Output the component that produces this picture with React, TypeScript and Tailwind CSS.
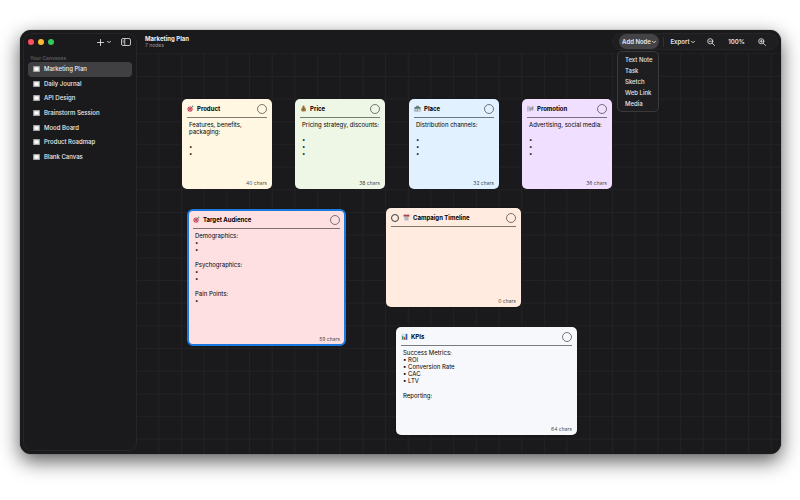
import { cva } from "class-variance-authority"
import clsx from "clsx"
import { useId, useState, type ReactNode } from "react"

type Tone = "cream" | "green" | "blue" | "purple" | "pink" | "peach" | "white"
type IconName = "target" | "money" | "store" | "megaphone" | "calendar" | "chart"

interface CanvasNode {
    id: string
    icon: IconName
    title: string
    tone: Tone
    x: number
    y: number
    width: number
    height: number
    chars: number
    blocks: string[][]
    task?: boolean
}

const canvases = [
    "Marketing Plan",
    "Daily Journal",
    "API Design",
    "Brainstorm Session",
    "Mood Board",
    "Product Roadmap",
    "Blank Canvas",
]

const nodeTypes = ["Text Note", "Task", "Sketch", "Web Link", "Media"]

// x / y are relative to the top left corner of the canvas
const nodes: CanvasNode[] = [
    { id: "product", icon: "target", title: "Product", tone: "cream", x: 45, y: 46, width: 90, height: 90, chars: 40, blocks: [["Features, benefits, packaging:"], ["•", "•"]] },
    { id: "price", icon: "money", title: "Price", tone: "green", x: 158, y: 46, width: 90, height: 90, chars: 38, blocks: [["Pricing strategy, discounts:"], ["•", "•", "•"]] },
    { id: "place", icon: "store", title: "Place", tone: "blue", x: 272, y: 46, width: 90, height: 90, chars: 32, blocks: [["Distribution channels:"], ["•", "•", "•"]] },
    { id: "promotion", icon: "megaphone", title: "Promotion", tone: "purple", x: 385, y: 46, width: 90, height: 90, chars: 36, blocks: [["Advertising, social media:"], ["•", "•", "•"]] },
    { id: "audience", icon: "target", title: "Target Audience", tone: "pink", x: 51, y: 157, width: 157, height: 135, chars: 59, blocks: [["Demographics:", "•", "•"], ["Psychographics:", "•", "•"], ["Pain Points:", "•"]] },
    { id: "timeline", icon: "calendar", title: "Campaign Timeline", tone: "peach", x: 249, y: 155, width: 135, height: 99, chars: 0, blocks: [], task: true },
    { id: "kpis", icon: "chart", title: "KPIs", tone: "white", x: 259, y: 274, width: 181, height: 108, chars: 64, blocks: [["Success Metrics:", "• ROI", "• Conversion Rate", "• CAC", "• LTV"], ["Reporting:"]] },
]

const card = cva("absolute flex flex-col rounded-[5px] px-[5px] text-left text-black", {
    variants: {
        tone: {
            cream: "bg-[#fff7e1]",
            green: "bg-[#eef7e6]",
            blue: "bg-[#e1f1ff]",
            purple: "bg-[#f0dfff]",
            pink: "bg-[#ffe0e2]",
            peach: "bg-[#ffebdf]",
            white: "bg-[#f7f8fb]",
        },
        selected: {
            true: "outline-2 -outline-offset-1 outline-[#1c79e0]",
            false: "shadow-[0_0_2px_rgba(0,0,0,0.5)]",
        },
    },
})

const nodeIcons: Record<IconName, ReactNode> = {
    target: (
        <>
            <circle cx="6.5" cy="8.5" r="5.5" fill="#c42b45" />
            <circle cx="6.5" cy="8.5" r="3.6" fill="#f3d4d8" />
            <circle cx="6.5" cy="8.5" r="2.2" fill="#c42b45" />
            <path d="M6.5 8.5 12 3" stroke="#4a4a4c" strokeWidth="1.2" />
            <path d="m10.5 3 2-2.5.4 1.6 1.6.4L12 4.8z" fill="#3f9a8c" />
        </>
    ),
    money: (
        <>
            <path d="M5.5 1h4.2L9 4c2.8 1.6 4 4.2 4 6.6 0 2.4-1.5 3.4-5.3 3.4S2.3 13 2.3 10.6c0-2.4 1.2-5 3.9-6.6z" fill="#a8834a" />
            <path d="M5.6 4h4" stroke="#6b4a1e" strokeWidth="1.3" />
            <path d="M9.3 7.8C7 6.8 5.8 8 7.6 9.3s1 2.9-1.7 2" fill="none" stroke="#5d4318" strokeWidth="1.2" />
        </>
    ),
    store: (
        <>
            <path d="M3.5 4.5 5 1.5h5l1.5 3z" fill="#6f8a80" />
            <path d="M1 6h13v8H1z" fill="#8b9a97" />
            <path d="M1 4.5h13v2.7H1z" fill="#53786a" />
            <path d="M3 9h3.5v3H3zM8.5 9H12v5H8.5z" fill="#dbe6ea" />
        </>
    ),
    megaphone: (
        <>
            <path d="M2 2v12" stroke="#8a8a90" strokeWidth="1.6" />
            <path d="M4 6.5 12.5 3v8.5L4 9.5z" fill="#a5a0ab" />
            <path d="M12.6 2.5V12" stroke="#77737e" strokeWidth="1.4" />
            <path d="M5 9.8 6 13.5h2l-.7-3.2z" fill="#77737e" />
            <path d="M3 4.5h3" stroke="#6f9a85" strokeWidth="1.5" />
        </>
    ),
    calendar: (
        <>
            <path d="M1.5 2.5h12L12.7 14H2.3z" fill="#d0cecf" />
            <path d="M1.2 1.5h12.6v4H1.2z" fill="#b7404c" />
            <path d="M4 8h7M4 10h7M4 12h7" stroke="#8b8184" strokeWidth="1.1" strokeDasharray="1.5 1" />
            <path d="M4.5.5v2.3M10.5.5v2.3" stroke="#606064" />
        </>
    ),
    chart: (
        <>
            <path d="M.5.5h14v14H.5z" fill="#e3e8ee" />
            <path d="M2 6h3.2v8.5H2z" fill="#3b9b62" />
            <path d="M6 8.5h3.2v6H6z" fill="#c8413f" />
            <path d="M10 2h3.5v12.5H10z" fill="#2b5fc4" />
        </>
    ),
}

const Chevron = () => (
    <svg viewBox="0 0 8 8" className="size-1" fill="none" stroke="currentColor" strokeWidth="1.8" strokeLinecap="round" strokeLinejoin="round">
        <path d="M1 2.5 4 5.5 7 2.5" />
    </svg>
)

const Magnifier = ({ plus }: { plus?: boolean }) => (
    <svg viewBox="0 0 16 16" className="size-2" fill="none" stroke="currentColor" strokeWidth="1.7" strokeLinecap="round">
        <circle cx="6.5" cy="6.5" r="5.2" />
        <path d="M10.5 10.5 15 15" />
        <path d={plus ? "M4.2 6.5h4.6M6.5 4.2v4.6" : "M4.2 6.5h4.6"} />
    </svg>
)

const CanvasIcon = () => (
    <svg viewBox="0 0 16 14" className="h-[6px] w-[7px]">
        <rect width="16" height="14" rx="2" fill="#a8a8aa" />
        <rect x="3" y="3" width="10" height="8" fill="#fff" />
    </svg>
)

function GridLines() {
    const id = useId()
    return (
        <svg className="absolute inset-0 size-full" aria-hidden="true">
            <defs>
                <pattern id={id} x="-1.4" y="0.2" width="22.68" height="22.68" patternUnits="userSpaceOnUse">
                    <path d="M0.5 0V22.68M0 0.5H22.68" stroke="#222224" strokeWidth="1" />
                </pattern>
            </defs>
            <rect width="100%" height="100%" fill={`url(#${id})`} />
        </svg>
    )
}

function NodeCard({ node, selected, onSelect }: { node: CanvasNode; selected: boolean; onSelect: () => void }) {
    return (
        <article
            className={card({ tone: node.tone, selected })}
            style={{ left: node.x, top: node.y, width: node.width, height: node.height }}
            onClick={onSelect}
        >
            <header className="flex h-[19px] shrink-0 items-center border-b border-black/50 pt-px">
                {node.task && (
                    <input
                        type="checkbox"
                        aria-label={`${node.title} done`}
                        className="mr-1 size-2 appearance-none rounded-full border border-[#3a3a3c] checked:bg-[#3a3a3c]"
                    />
                )}
                <svg viewBox="0 0 15 15" className="mr-[3px] size-[7px]" aria-hidden="true">
                    {nodeIcons[node.icon]}
                </svg>
                <h2 className="flex-1 text-[6px] leading-[8px] font-bold">{node.title}</h2>
                <button aria-label={`Connect ${node.title}`} className="size-[10px] rounded-full border border-black/50" />
            </header>
            <div className="flex flex-1 flex-col gap-2 pt-[3px] pl-[2px] text-[6px] leading-[7px]">
                {node.blocks.map((lines, i) => (
                    <div key={i}>
                        {lines.map((line, j) => (
                            <p key={j}>{line}</p>
                        ))}
                    </div>
                ))}
            </div>
            <footer className="pb-[3px] text-right text-[5px] leading-[6px] text-black/75">{node.chars} chars</footer>
        </article>
    )
}

function Sidebar({ active, onPick }: { active: string; onPick: (name: string) => void }) {
    return (
        <aside className="my-[3px] ml-[3px] flex w-[114px] shrink-0 flex-col rounded-[9px] border border-[#262628] bg-[#1a1a1c] px-1">
            <div className="flex h-4 items-center">
                <div className="flex gap-1">
                    <button aria-label="Close" className="size-[6px] rounded-full bg-[#ff4f5e]" />
                    <button aria-label="Minimize" className="size-[6px] rounded-full bg-[#fdbc33]" />
                    <button aria-label="Zoom" className="size-[6px] rounded-full bg-[#34c75a]" />
                </div>
                <button aria-label="New canvas" className="ml-auto flex items-center gap-[3px] text-[#e4e4e6]">
                    <svg viewBox="0 0 14 14" className="size-[7px]" stroke="currentColor" strokeWidth="1.8" strokeLinecap="round">
                        <path d="M7 1v12M1 7h12" />
                    </svg>
                    <Chevron />
                </button>
                <button aria-label="Toggle sidebar" className="mr-px ml-[10px] text-[#d4d4d6]">
                    <svg viewBox="0 0 20 16" className="h-2 w-[10px]" fill="none" stroke="currentColor" strokeWidth="1.8">
                        <rect x="1" y="1" width="18" height="14" rx="3" />
                        <path d="M7.5 1v14M3.5 4.5h1.6M3.5 7h1.6M3.5 9.5h1.6" />
                    </svg>
                </button>
            </div>
            <h2 className="mt-[5px] pl-[2px] text-[5px] leading-[7px] font-semibold text-[#5c5c5f]">Your Canvases</h2>
            <ul className="grid h-[102px] grid-rows-7">
                {canvases.map((name) => (
                    <li key={name} className="flex">
                        <button
                            className={clsx(
                                "flex flex-1 items-center gap-1 rounded-[4px] pl-[5px] text-[6px] leading-[8px] font-medium text-[#ededef]",
                                name === active && "bg-[#404042]",
                            )}
                            onClick={() => onPick(name)}
                        >
                            <CanvasIcon />
                            {name}
                        </button>
                    </li>
                ))}
            </ul>
        </aside>
    )
}

function ToolButton({ label, className, onClick, children }: { label?: string; className?: string; onClick?: () => void; children: ReactNode }) {
    return (
        <button aria-label={label} onClick={onClick} className={clsx("flex items-center justify-center", className)}>
            {children}
        </button>
    )
}

export default function App() {
    const [active, setActive] = useState("Marketing Plan")
    const [selected, setSelected] = useState("audience")
    const [menuOpen, setMenuOpen] = useState(true)

    return (
        <div className="flex h-screen bg-white pt-[30px] pr-[19px] pb-[46px] pl-5 font-[Inter,sans-serif] text-[6px] leading-[8px]">
            <div className="flex flex-1 overflow-hidden rounded-[11px] bg-[#1a1a1c] shadow-[0_0_1px_rgba(0,0,0,0.7),0_7px_20px_rgba(0,0,0,0.65)]">
                <Sidebar active={active} onPick={setActive} />
                <main className="flex min-w-0 flex-1 flex-col">
                    <header className="flex h-[23px] shrink-0 items-center justify-between pr-[3px] pl-2">
                        <div>
                            <h1 className="text-[6px] leading-[7px] font-bold text-[#f2f2f4]">{active}</h1>
                            <p className="text-[5px] leading-[6px] font-medium text-[#8a8a8d]">{nodes.length} nodes</p>
                        </div>
                        <div className="flex h-[17px] items-center rounded-full border border-[#262628] bg-[#1e1e20] pl-[6px] font-semibold text-[#e4e4e6]">
                            <div className="relative">
                                <ToolButton className="h-[15px] w-10 gap-px rounded-full bg-[#444447]" onClick={() => setMenuOpen((open) => !open)}>
                                    Add Node
                                    <Chevron />
                                </ToolButton>
                                {menuOpen && (
                                    <ul className="absolute top-[17px] -left-[2px] z-10 w-[42px] rounded-[5px] border border-[#3a3a3c] bg-[#1e1e20] py-[2px] font-medium">
                                        {nodeTypes.map((type) => (
                                            <li key={type} className="flex">
                                                <button className="h-[11px] flex-1 pl-[7px] text-left">{type}</button>
                                            </li>
                                        ))}
                                    </ul>
                                )}
                            </div>
                            <span className="ml-1 h-[10px] w-px bg-[#303032]" />
                            <ToolButton className="w-[37px] gap-px">
                                Export
                                <Chevron />
                            </ToolButton>
                            <ToolButton label="Zoom out" className="w-5">
                                <Magnifier />
                            </ToolButton>
                            <ToolButton className="w-[31px]">100%</ToolButton>
                            <ToolButton label="Zoom in" className="mr-[5px] w-5">
                                <Magnifier plus />
                            </ToolButton>
                        </div>
                    </header>
                    <section className="relative flex-1 overflow-hidden" aria-label="Canvas">
                        <GridLines />
                        {nodes.map((node) => (
                            <NodeCard key={node.id} node={node} selected={node.id === selected} onSelect={() => setSelected(node.id)} />
                        ))}
                    </section>
                </main>
            </div>
        </div>
    )
}
